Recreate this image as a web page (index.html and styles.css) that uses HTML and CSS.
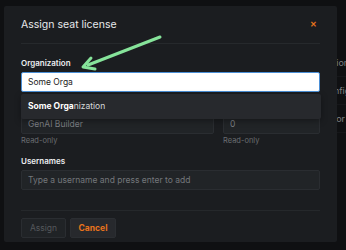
FILE: index.html
```html
<!DOCTYPE html>
<html lang="en">
<head>
    <meta charset="UTF-8">
    <meta name="viewport" content="width=device-width, initial-scale=1.0">
    <title>Assign seat license</title>
    <link rel="stylesheet" href="styles.css">
</head>
<body>
    <div class="page">
        <div class="page-row">Action</div>
        <div class="page-row">Config</div>
        <div class="page-row">Color</div>
    </div>

    <div class="modal">
        <div class="modal-header">
            <h2>Assign seat license</h2>
            <button class="close-btn" aria-label="Close">&#x2715;</button>
        </div>
        <div class="modal-body">
            <div class="field org-field">
                <label>Organization</label>
                <input type="text" class="input active" value="Some Orga">
                <div class="dropdown">
                    <div class="dropdown-item"><b>Some Orga</b>nization</div>
                </div>
            </div>
            <div class="field-row">
                <div class="field wide">
                    <label>Product</label>
                    <input type="text" class="input" value="GenAI Builder" readonly>
                    <span class="hint">Read-only</span>
                </div>
                <div class="field narrow">
                    <label>Seats</label>
                    <input type="text" class="input" value="0" readonly>
                    <span class="hint">Read-only</span>
                </div>
            </div>
            <div class="field">
                <label>Usernames</label>
                <input type="text" class="input" placeholder="Type a username and press enter to add">
            </div>
        </div>
        <div class="modal-footer">
            <button class="btn btn-assign" disabled>Assign</button>
            <button class="btn btn-cancel">Cancel</button>
        </div>
    </div>

    <!-- callout arrow pointing at the organization input -->
    <svg class="callout" width="346" height="250" viewBox="0 0 346 250">
        <line x1="160" y1="37" x2="88" y2="65" stroke="#86e39a" stroke-width="3" stroke-linecap="round"/>
        <polyline points="91,58 83,67 95,69" fill="none" stroke="#86e39a" stroke-width="3" stroke-linecap="round" stroke-linejoin="round"/>
    </svg>
</body>
</html>
```

FILE: styles.css
```css
body {
    margin: 0;
    background: #0f1012;
    font-family: Inter, "Liberation Sans", sans-serif;
    color: #e4e5e7;
    height: 250px;
    overflow: hidden;
}
.page {
    padding: 49px 0 0 322px;
}
.page-row {
    height: 27px;
    line-height: 27px;
    font-size: 9px;
    color: #7d8084;
    border-bottom: 1px solid #16171a;
}
.modal {
    position: fixed;
    left: 4px;
    top: 6px;
    width: 333px;
    height: 236px;
    background: #1b1d20;
    border-radius: 2px;
    box-sizing: border-box;
    padding: 0 17px;
    display: flex;
    flex-direction: column;
}
.modal-header {
    display: flex;
    justify-content: space-between;
    align-items: center;
    height: 37px;
    border-bottom: 1px solid #26292c;
}
.modal-header h2 {
    margin: 0;
    font-size: 10.5px;
    font-weight: 400;
    color: #e8e9eb;
}
.close-btn {
    background: none;
    border: none;
    padding: 0;
    margin-right: 3px;
    color: #e8731c;
    font-size: 7.5px;
    font-weight: 700;
    cursor: pointer;
}
.modal-body {
    padding: 13px 0 20px;
    display: flex;
    flex-direction: column;
    gap: 7px;
    border-bottom: 1px solid #25282b;
}
.field {
    display: flex;
    flex-direction: column;
    position: relative;
}
.field label {
    font-size: 8px;
    font-weight: 600;
    line-height: 12px;
    margin-bottom: 3px;
    color: #eceef0;
}
.input {
    height: 20px;
    box-sizing: border-box;
    border: 1px solid #2a2d31;
    border-radius: 2px;
    background: #212427;
    color: #7c7f83;
    font-family: inherit;
    font-size: 8.5px;
    padding: 0 6px;
    outline: none;
    min-width: 0;
}
.input::placeholder {
    color: #74777b;
}
.input.active {
    background: #ffffff;
    border-color: #4b8fd6;
    color: #222;
}
.dropdown {
    position: absolute;
    top: 37px;
    left: 0;
    right: -1px;
    z-index: 2;
    background: #27292d;
    border-radius: 2px;
    box-shadow: 0 2px 6px rgba(0, 0, 0, 0.35);
}
.dropdown-item {
    height: 25px;
    line-height: 25px;
    padding: 0 7px;
    font-size: 8.5px;
    color: #d8dadc;
}
.dropdown-item b {
    font-weight: 700;
    color: #ffffff;
}
.field-row {
    display: flex;
    gap: 9px;
}
.field.wide {
    flex: 0 0 193px;
}
.field.narrow {
    flex: 1 1 0;
    min-width: 0;
}
.hint {
    font-size: 7.5px;
    line-height: 10px;
    margin-top: 2px;
    color: #6a6d71;
}
.modal-body .field-row + .field {
    margin-top: 2px;
}
.modal-footer {
    display: flex;
    gap: 4px;
    padding-top: 7px;
}
.btn {
    height: 20px;
    border-radius: 2px;
    font-family: inherit;
    font-size: 8.5px;
    cursor: pointer;
}
.btn-assign {
    width: 45px;
    background: #202326;
    border: 1px solid #2a2d31;
    color: #55585c;
}
.btn-cancel {
    width: 46px;
    background: #27292d;
    border: 1px solid #2b2e32;
    color: #e8731c;
    font-weight: 700;
}
.callout {
    position: fixed;
    left: 0;
    top: 0;
    pointer-events: none;
    z-index: 5;
}
```
